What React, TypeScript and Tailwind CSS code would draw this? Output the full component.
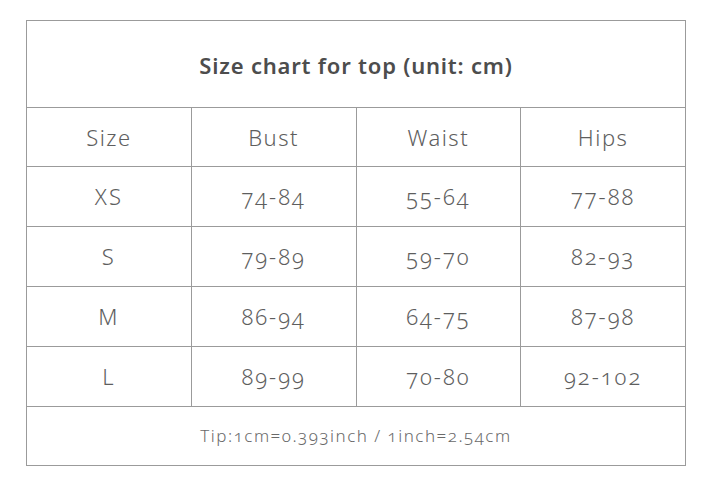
const rows = [
  ["XS", "74-84", "55-64", "77-88"],
  ["S", "79-89", "59-70", "82-93"],
  ["M", "86-94", "64-75", "87-98"],
  ["L", "89-99", "70-80", "92-102"],
];

const headers = ["Size", "Bust", "Waist", "Hips"];

export default function App() {
  return (
    <div className="w-[716px] h-[491px] bg-white pt-[20px] pl-[26px] font-['Noto_Sans',sans-serif] text-[#5e5e5e] [font-variant-numeric:oldstyle-nums]">
      <table className="w-[660px] border-collapse table-fixed">
        <tbody>
          <tr className="h-[87px]">
            <td
              colSpan={4}
              className="border border-[#9b9b9b] pt-[3px] text-center text-[22px] font-semibold tracking-[0.8px] text-[#4d4d4d]"
            >
              Size chart for top (unit: cm)
            </td>
          </tr>
          <tr className="h-[59px]">
            {headers.map((h) => (
              <td
                key={h}
                className="border border-[#9b9b9b] text-center text-[22px] font-light tracking-[1.5px]"
              >
                {h}
              </td>
            ))}
          </tr>
          {rows.map((r) => (
            <tr key={r[0]} className="h-[60px]">
              {r.map((c, i) => (
                <td
                  key={i}
                  className="border border-[#9b9b9b] text-center text-[22px] font-light tracking-[2px]"
                >
                  {c}
                </td>
              ))}
            </tr>
          ))}
          <tr className="h-[59px]">
            <td
              colSpan={4}
              className="border border-[#9b9b9b] text-center text-[17px] font-light tracking-[1.5px] text-[#6a6a6a]"
            >
              Tip:1cm=0.393inch / 1inch=2.54cm
            </td>
          </tr>
        </tbody>
      </table>
    </div>
  );
}
